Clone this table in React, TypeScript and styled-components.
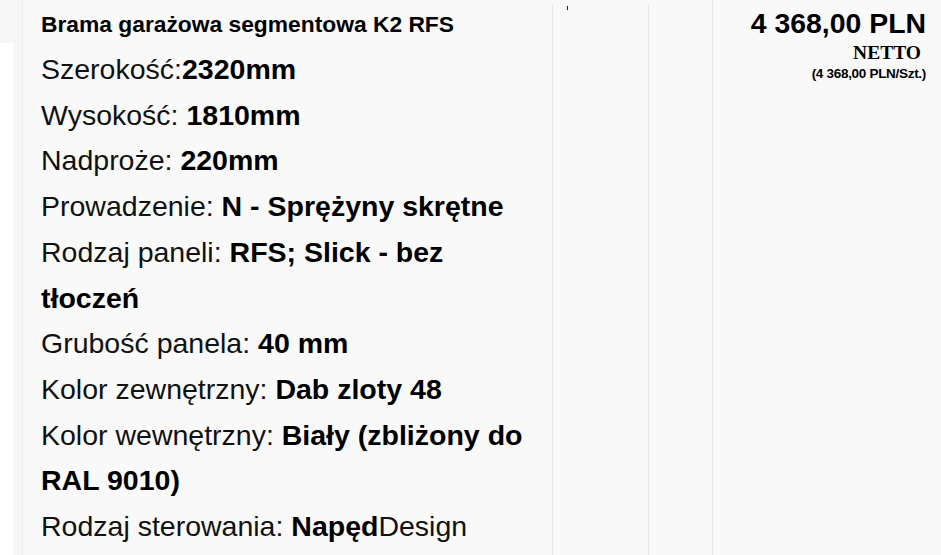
import React from "react";
import styled, { createGlobalStyle } from "styled-components";

const GlobalStyle = createGlobalStyle`
  html, body {
    margin: 0;
    padding: 0;
    background: #ffffff;
    overflow: hidden;
  }
  body {
    font-family: "Liberation Sans", Arial, sans-serif;
    color: #000;
  }
`;

const specs = [
  { label: "Szerokość:", value: "2320mm" },
  { label: "Wysokość: ", value: "1810mm" },
  { label: "Nadproże: ", value: "220mm" },
  { label: "Prowadzenie: ", value: "N - Sprężyny skrętne" },
  { label: "Rodzaj paneli: ", value: "RFS; Slick - bez tłoczeń" },
  { label: "Grubość panela: ", value: "40 mm" },
  { label: "Kolor zewnętrzny: ", value: "Dab zloty 48" },
  { label: "Kolor wewnętrzny: ", value: "Biały (zbliżony do RAL 9010)" },
  { label: "Rodzaj sterowania: ", value: "Napęd", tail: "Design" },
];

const App = () => {
  return (
    <>
      <GlobalStyle />
      <Row>
        <Gutter>
          <GutterFill />
        </Gutter>
        <NameCell>
          <ProductName>Brama garażowa segmentowa K2 RFS</ProductName>
          {specs.map((s) => (
            <SpecLine key={s.label}>
              {s.label}
              <strong>{s.value}</strong>
              {s.tail}
            </SpecLine>
          ))}
        </NameCell>
        <QtyCell>
          <Caret />
        </QtyCell>
        <Cell />
        <PriceCell>
          <Price>4 368,00 PLN</Price>
          <Netto>NETTO</Netto>
          <UnitPrice>(4 368,00 PLN/Szt.)</UnitPrice>
        </PriceCell>
      </Row>
    </>
  );
};

const Row = styled.div`
  display: grid;
  grid-template-columns: 22px 530px 96px 64px 1fr;
  height: 555px;
  background: #f9f9f9;
`;

const Gutter = styled.div`
  display: flex;
  flex-direction: column;
  justify-content: flex-end;
  background: #f6f6f6;
`;

const GutterFill = styled.div`
  width: 13px;
  height: 512px;
  background: #ffffff;
`;

const Cell = styled.div`
  border-left: 1px solid #e4e4e4;
  margin-top: 5px;
`;

const NameCell = styled(Cell)`
  margin-top: 0;
  padding: 9px 16px 0 18px;
  border-left-color: #ececec;
`;

const ProductName = styled.div`
  font-size: 22.8px;
  font-weight: bold;
  line-height: 30px;
  margin-bottom: 8px;
  white-space: nowrap;
`;

const SpecLine = styled.div`
  font-size: 28.5px;
  line-height: 45.7px;
  color: #111;

  strong {
    color: #000;
  }
`;

const QtyCell = styled(Cell)`
  padding: 1px 0 0 14px;
`;

const Caret = styled.span`
  display: block;
  width: 1px;
  height: 4px;
  background: #222;
`;

const PriceCell = styled(Cell)`
  margin-top: 0;
  padding: 6px 15px 0 0;
  text-align: right;
  border-left: none;
  box-shadow: inset 1px 0 0 #e4e4e4;
`;

const Price = styled.div`
  font-size: 28.4px;
  font-weight: bold;
  line-height: 34px;
`;

const Netto = styled.div`
  font-family: "Liberation Serif", "Times New Roman", serif;
  font-size: 19.5px;
  font-weight: bold;
  line-height: 22px;
  margin-top: 2px;
  padding-right: 5px;
`;

const UnitPrice = styled.div`
  font-size: 13.5px;
  font-weight: bold;
  line-height: 16px;
  letter-spacing: -0.3px;
  margin-top: 2px;
`;

export default App;
